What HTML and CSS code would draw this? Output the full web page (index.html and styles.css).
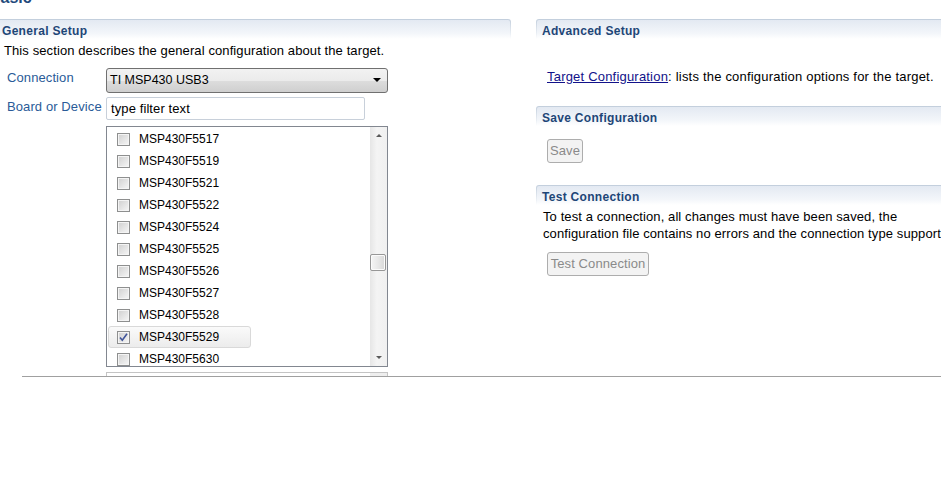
FILE: index.html
```html
<!DOCTYPE html>
<html>
<head>
<meta charset="utf-8">
<link rel="stylesheet" href="styles.css">
</head>
<body>
<div class="main">
  <div class="title">Basic</div>
  <div class="cols">
    <div class="col col-left">
      <div class="sec-head"><div class="sec-head-in">General Setup</div></div>
      <p class="desc">This section describes the general configuration about the target.</p>
      <div class="form">
        <div class="lbl lbl-conn">Connection</div>
        <div class="select">TI MSP430 USB3<span class="arrow"></span></div>
        <div class="lbl lbl-board">Board or Device</div>
        <div class="filter">type filter text</div>
        <div></div>
        <div class="list">
          <div class="items">
            <div class="row"><span class="cb"></span>MSP430F5517</div>
            <div class="row"><span class="cb"></span>MSP430F5519</div>
            <div class="row"><span class="cb"></span>MSP430F5521</div>
            <div class="row"><span class="cb"></span>MSP430F5522</div>
            <div class="row"><span class="cb"></span>MSP430F5524</div>
            <div class="row"><span class="cb"></span>MSP430F5525</div>
            <div class="row"><span class="cb"></span>MSP430F5526</div>
            <div class="row"><span class="cb"></span>MSP430F5527</div>
            <div class="row"><span class="cb"></span>MSP430F5528</div>
            <div class="row row-sel"><span class="cb"><svg class="check" width="11" height="11" viewBox="0 0 11 11"><path d="M2 5.5 L4.3 8.3 L9 1.8" fill="none" stroke="#41559a" stroke-width="1.6"/></svg></span>MSP430F5529</div>
            <div class="row"><span class="cb"></span>MSP430F5630</div>
          </div>
          <div class="sbar">
            <div class="sbtn"><span class="tri-up"></span></div>
            <div class="track"><div class="thumb"></div></div>
            <div class="sbtn"><span class="tri-down"></span></div>
          </div>
        </div>
        <div></div>
        <div class="list2"><div class="list2-bar"></div></div>
      </div>
    </div>
    <div class="col col-right">
      <div class="sec-head"><div class="sec-head-in">Advanced Setup</div></div>
      <p class="adv"><a class="link" href="#">Target Configuration</a>: lists the configuration options for the target.</p>
      <div class="sec-head sec-save"><div class="sec-head-in">Save Configuration</div></div>
      <div class="btn btn-save">Save</div>
      <div class="sec-head sec-test"><div class="sec-head-in">Test Connection</div></div>
      <p class="test-desc">To test a connection, all changes must have been saved, the<br>configuration file contains no errors and the connection type supports this function.</p>
      <div class="btn btn-test">Test Connection</div>
    </div>
  </div>
</div>
<div class="sep"></div>
</body>
</html>
```

FILE: styles.css
```css
html, body {
  margin: 0;
  padding: 0;
  background: #ffffff;
}
body {
  width: 941px;
  height: 503px;
  overflow: hidden;
  font-family: "Liberation Sans", Arial, sans-serif;
  font-size: 13px;
  letter-spacing: 0.1px;
  color: #000;
}
.main {
  height: 376px;
  overflow: hidden;
}
.title {
  margin-top: -12px;
  margin-left: -11px;
  height: 20px;
  line-height: 20px;
  font-size: 16px;
  font-weight: bold;
  letter-spacing: 0;
  color: #1f4a7c;
}
.cols {
  display: flex;
  margin-top: 11px;
  margin-left: -4px;
  gap: 25px;
}
.col {
  flex-shrink: 0;
}
.col-left {
  width: 515px;
}
.col-right {
  width: 520px;
}
.sec-head {
  padding: 1px 1px 0 1px;
  background: linear-gradient(#c2cedc, #e8edf3 70%, #ffffff);
  border-radius: 3px 3px 0 0;
}
.sec-head-in {
  height: 19px;
  box-sizing: border-box;
  padding-top: 3px;
  line-height: 16px;
  padding-left: 5px;
  background: linear-gradient(#e3e9f2, #f3f6fa 70%, #ffffff);
  border-radius: 2px 2px 0 0;
  font-weight: bold;
  font-size: 12px;
  letter-spacing: 0.3px;
  color: #1e4677;
}
.desc {
  margin: 3px 0 0 0;
  padding-left: 8px;
  line-height: 17px;
}
.form {
  display: grid;
  grid-template-columns: 99px auto;
  padding-left: 11px;
  margin-top: 9px;
}
.lbl {
  line-height: 17px;
  padding-top: 1px;
  color: #2a5b98;
  white-space: nowrap;
}
.lbl-board {
  padding-top: 1px;
  margin-top: 4px;
}
.select {
  position: relative;
  width: 282px;
  height: 25px;
  box-sizing: border-box;
  border: 1px solid #707070;
  border-radius: 3px;
  background: linear-gradient(#f2f2f2, #ebebeb 50%, #dddddd 51%, #cfcfcf);
  line-height: 23px;
  padding-left: 3px;
  font-size: 12.5px;
  letter-spacing: 0;
}
.arrow {
  position: absolute;
  right: 6px;
  top: 9px;
  width: 0;
  height: 0;
  border-left: 4px solid transparent;
  border-right: 4px solid transparent;
  border-top: 4px solid #000;
}
.filter {
  margin-top: 4px;
  width: 259px;
  height: 23px;
  box-sizing: border-box;
  border: 1px solid #c8d0da;
  border-radius: 2px;
  line-height: 21px;
  padding-left: 4px;
}
.list {
  margin-top: 6px;
  width: 282px;
  height: 241px;
  box-sizing: border-box;
  border: 1px solid #828790;
  display: flex;
  overflow: hidden;
}
.items {
  width: 263px;
  padding-top: 1px;
  overflow: hidden;
}
.row {
  display: flex;
  align-items: center;
  gap: 9px;
  width: 143px;
  height: 22px;
  box-sizing: border-box;
  margin-left: 1px;
  padding-left: 8px;
  border: 1px solid transparent;
  border-radius: 3px;
  font-size: 12px;
  letter-spacing: 0;
  color: #000;
}
.row-sel {
  border-color: #d9d9d9;
  background: linear-gradient(#fafafa, #ececec);
}
.cb {
  position: relative;
  width: 13px;
  height: 13px;
  box-sizing: border-box;
  border: 1px solid #8e8f8f;
  background: linear-gradient(135deg, #cfcfcf, #f7f7f7);
  box-shadow: inset 0 0 0 1px #f4f4f4;
  flex-shrink: 0;
}
.check {
  position: absolute;
  left: 0;
  top: 0;
}
.sbar {
  width: 17px;
  display: flex;
  flex-direction: column;
  background: linear-gradient(90deg, #e6e6e6, #f4f4f4 40%, #f0f0f0);
}
.sbtn {
  height: 17px;
  display: flex;
  align-items: center;
  justify-content: center;
  flex-shrink: 0;
}
.tri-up {
  width: 0;
  height: 0;
  border-left: 3px solid transparent;
  border-right: 3px solid transparent;
  border-bottom: 3px solid #5a5a5a;
}
.tri-down {
  width: 0;
  height: 0;
  border-left: 3px solid transparent;
  border-right: 3px solid transparent;
  border-top: 3px solid #5a5a5a;
}
.track {
  flex: 1;
}
.thumb {
  margin-top: 110px;
  width: 16px;
  height: 17px;
  box-sizing: border-box;
  border: 1px solid #979797;
  border-radius: 2px;
  background: linear-gradient(90deg, #f5f5f5, #e8e8e8 50%, #d8d8d8);
  box-shadow: inset 0 0 0 1px #fbfbfb;
}
.list2 {
  margin-top: 5px;
  width: 282px;
  height: 60px;
  box-sizing: border-box;
  border: 1px solid #c4c4c4;
  display: flex;
  justify-content: flex-end;
}
.list2-bar {
  width: 17px;
  background: #eeeeee;
}
.adv {
  margin: 29px 0 0 0;
  padding-left: 11px;
  line-height: 17px;
  letter-spacing: 0.2px;
  white-space: nowrap;
}
.link {
  color: #12128a;
  text-decoration: underline;
}
.sec-save {
  margin-top: 21px;
}
.btn {
  margin-left: 11px;
  height: 24px;
  box-sizing: border-box;
  border: 1px solid #adadad;
  border-radius: 3px;
  background: #f3f3f3;
  color: #8a8a8a;
  line-height: 22px;
  text-align: center;
}
.btn-save {
  margin-top: 13px;
  width: 36px;
}
.sec-test {
  margin-top: 22px;
}
.test-desc {
  margin: 3px 0 0 0;
  padding-left: 7px;
  line-height: 17px;
  white-space: nowrap;
}
.btn-test {
  margin-top: 10px;
  width: 102px;
}
.sep {
  margin-left: 22px;
  border-top: 1px solid #a0a0a0;
}
```
